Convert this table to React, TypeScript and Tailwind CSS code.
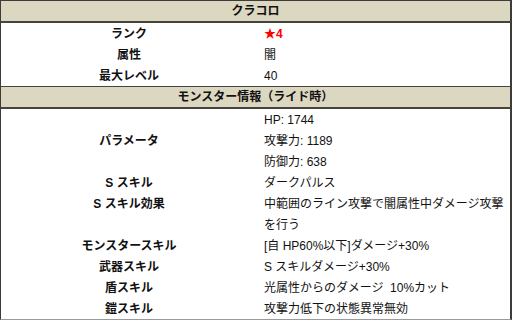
import React from 'react';

const font = { fontFamily: '"Liberation Sans", "Noto Sans CJK JP", sans-serif' };

type Row = { label: string; values: React.ReactNode[]; top?: boolean };

const basic: Row[] = [
  { label: 'ランク', values: [<span className="font-bold text-[#ff0000]">★4</span>] },
  { label: '属性', values: ['闇'] },
  { label: '最大レベル', values: ['40'] },
];

const info: Row[] = [
  { label: 'パラメータ', values: ['HP: 1744', '攻撃力: 1189', '防御力: 638'] },
  { label: 'S スキル', values: ['ダークパルス'] },
  { label: 'S スキル効果', values: ['中範囲のライン攻撃で闇属性中ダメージ攻撃', 'を行う'], top: true },
  { label: 'モンスタースキル', values: ['[自 HP60%以下]ダメージ+30%'] },
  { label: '武器スキル', values: ['S スキルダメージ+30%'] },
  { label: '盾スキル', values: ['光属性からのダメージ  10%カット'] },
  { label: '鎧スキル', values: ['攻撃力低下の状態異常無効'] },
];

function Header({ title }: { title: string }) {
  return (
    <div className="flex h-[22px] items-center justify-center border-b-2 border-[#45443d] bg-[#dcd7c0] text-[12px] font-bold text-[#111]">
      {title}
    </div>
  );
}

function Rows({ rows }: { rows: Row[] }) {
  return (
    <div className="grid grid-cols-[256px_1fr] text-[12px] text-[#111]">
      {rows.map((r) => (
        <React.Fragment key={r.label}>
          <div
            className={r.top ? 'flex h-[21px] items-center justify-center font-bold' : 'flex items-center justify-center font-bold'}
            style={{ gridRow: `span ${r.values.length}` }}
          >
            {r.label}
          </div>
          {r.values.map((v, i) => (
            <div key={i} className="col-start-2 flex h-[21px] items-center pl-[7px] whitespace-pre">
              {v}
            </div>
          ))}
        </React.Fragment>
      ))}
    </div>
  );
}

export default function App() {
  return (
    <div className="h-[321px] w-[512px] bg-white" style={font}>
      <div className="h-[320px] w-[512px] overflow-hidden border-t border-l border-r-2 border-b border-[#3c3c38] border-b-[#9a9a9a]">
        <Header title="クラコロ" />
        <Rows rows={basic} />
        <div className="border-t border-[#45443d]">
          <Header title="モンスター情報（ライド時）" />
        </div>
        <Rows rows={info} />
      </div>
    </div>
  );
}
